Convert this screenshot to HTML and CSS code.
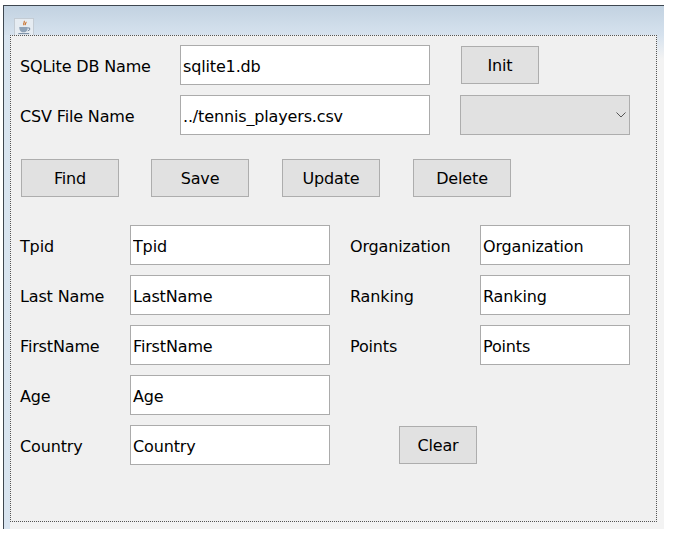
FILE: index.html
```html
<!DOCTYPE html>
<html>
<head>
  <meta charset="UTF-8" />
  <title>SQLite Demo</title>
  <link rel="stylesheet" href="styles.css">
</head>
<body>
  <div class="window">
    <div class="titlebar">
      <span class="app-icon">
        <svg viewBox="0 0 18 18" width="18" height="17">
          <path d="M9 2c1.500 1.500-1.500 2.500 0 4.500M11 3c1 1-1.500 2-.5 3.500" fill="none" stroke="#c8702c" stroke-width="1.200"/>
          <path d="M4 8.500h9c0 3-1 5-3 5.500H7c-2-.5-3-2.500-3-5.500z" fill="#8fa3b8"/>
          <path d="M13 9.500h2v2l-2 1" fill="none" stroke="#6c8199" stroke-width="1"/>
          <path d="M3 15h11.500v1H3z" fill="#6c8199"/>
        </svg>
      </span>
    </div>
    <div class="frame">
      <main class="panel">
        <div class="db-row">
          <label class="db-label">SQLite DB Name</label>
          <input class="field db-field" type="text" value="sqlite1.db">
          <button class="btn init-btn">Init</button>
        </div>
        <div class="db-row">
          <label class="db-label">CSV File Name</label>
          <input class="field db-field" type="text" value="../tennis_players.csv">
          <div class="combo">
            <svg viewBox="0 0 10 6" width="10" height="6">
              <path d="M.5.500 5 5 9.500.500" fill="none" stroke="#555" stroke-width="1"/>
            </svg>
          </div>
        </div>
        <div class="actions">
          <button class="btn">Find</button>
          <button class="btn">Save</button>
          <button class="btn">Update</button>
          <button class="btn">Delete</button>
        </div>
        <div class="form">
          <label>Tpid</label>
          <input class="field" type="text" value="Tpid">
          <label>Organization</label>
          <input class="field" type="text" value="Organization">

          <label>Last Name</label>
          <input class="field" type="text" value="LastName">
          <label>Ranking</label>
          <input class="field" type="text" value="Ranking">

          <label>FirstName</label>
          <input class="field" type="text" value="FirstName">
          <label>Points</label>
          <input class="field" type="text" value="Points">

          <label>Age</label>
          <input class="field" type="text" value="Age">
          <span class="empty"></span>

          <label>Country</label>
          <input class="field" type="text" value="Country">
          <button class="btn clear-btn">Clear</button>
        </div>
      </main>
    </div>
  </div>
</body>
</html>
```

FILE: styles.css
```css
* {
  box-sizing: border-box;
}
body {
  background: #fff;
  color: #000;
  margin: 0;
  font-family: "DejaVu Sans", sans-serif;
  font-size: 16px;
  letter-spacing: -0.15px;
}
.window {
  margin: 5px 0 0 3px;
  width: 661px;
  height: 524px;
  border-top: 1px solid #3e4750;
  border-left: 1px solid #3e4750;
  display: flex;
  flex-direction: column;
}
.titlebar {
  height: 29px;
  flex: none;
  background: linear-gradient(#c2d2e1, #d6e2ee);
  display: flex;
  align-items: flex-end;
  padding-left: 10px;
}
.app-icon {
  width: 20px;
  height: 17px;
  background: #e6ecf2;
  border: 1px solid #c4ccd4;
  border-bottom: 0;
  display: flex;
  justify-content: center;
}
.frame {
  flex: 1;
  background:
    linear-gradient(90deg, #d8e4f0 6px, transparent 6px),
    linear-gradient(#d6e2ee, #f3f3f3 24px);
  padding: 0 7px 7px 6px;
  display: flex;
}
.panel {
  flex: 1;
  background: #f0f0f0;
  border: 1px dotted #555;
  padding: 9px 0 0 9px;
}
.db-row {
  display: flex;
  align-items: center;
  height: 40px;
  margin-bottom: 10px;
}
.db-label {
  width: 160px;
  padding-top: 2px;
}
.db-field {
  width: 250px;
}
.field {
  height: 40px;
  border: 1px solid #ababab;
  background: #fff;
  padding: 2px 2px 0;
  font: inherit;
  letter-spacing: inherit;
  color: #000;
  outline: 0;
}
.btn {
  width: 98px;
  height: 38px;
  background: #e1e1e1;
  border: 1px solid #adadad;
  padding: 1px 0 0;
  font: inherit;
  letter-spacing: inherit;
  color: #000;
}
.init-btn {
  width: 78px;
  margin-left: 31px;
}
.combo {
  width: 170px;
  height: 40px;
  margin-left: 30px;
  background: #e1e1e1;
  border: 1px solid #adadad;
  display: flex;
  align-items: center;
  justify-content: flex-end;
  padding-right: 3px;
}
.actions {
  display: flex;
  gap: 33px;
  margin: 24px 0 28px 1px;
}
.actions .btn:first-child {
  margin-right: -1px;
}
.form {
  display: grid;
  grid-template-columns: 110px 200px 150px 150px;
  grid-auto-rows: 40px;
  row-gap: 10px;
  align-items: center;
}
.form label {
  white-space: nowrap;
  padding-top: 2px;
}
.form label:nth-child(4n+3) {
  margin-left: 20px;
}
.empty {
  grid-column: 3 / 5;
}
.clear-btn {
  grid-column: 3 / 5;
  width: 78px;
  margin-left: 69px;
}
```
